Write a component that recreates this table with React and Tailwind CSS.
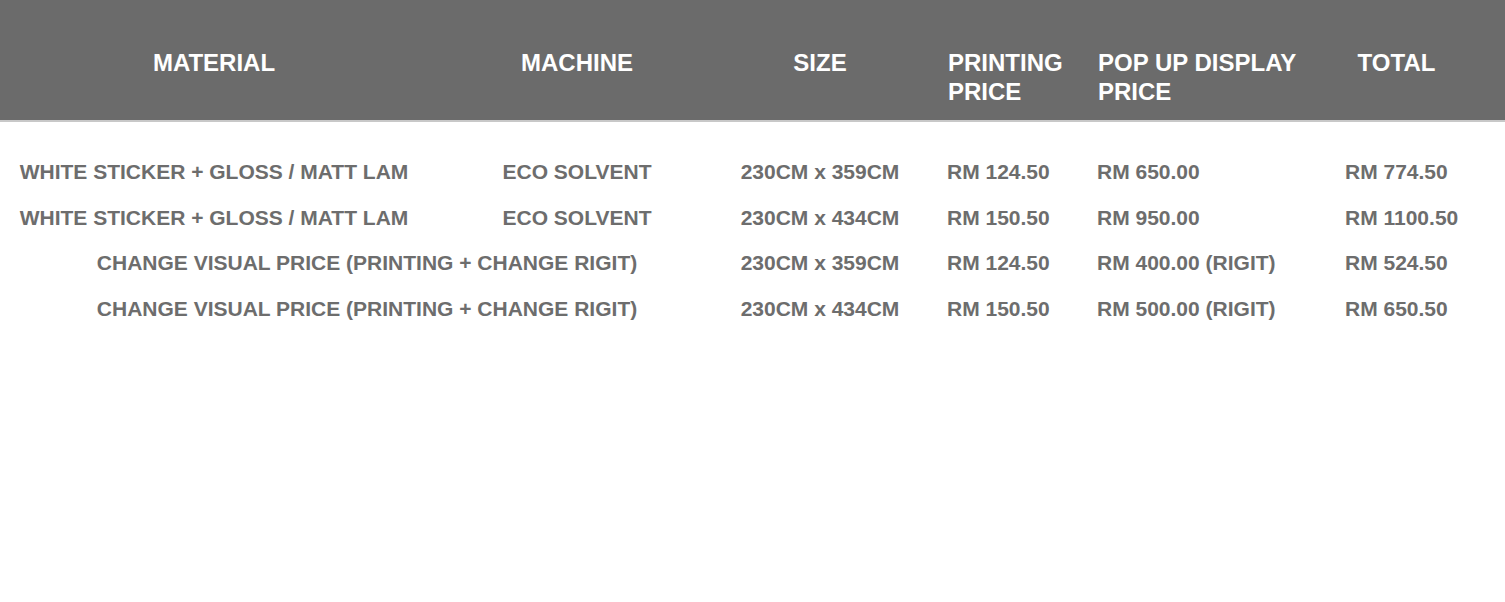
import React from 'react';

const rows = [
  { material: 'WHITE STICKER + GLOSS / MATT LAM', machine: 'ECO SOLVENT', size: '230CM x 359CM', printing: 'RM 124.50', popup: 'RM 650.00', total: 'RM 774.50' },
  { material: 'WHITE STICKER + GLOSS / MATT LAM', machine: 'ECO SOLVENT', size: '230CM x 434CM', printing: 'RM 150.50', popup: 'RM 950.00', total: 'RM 1100.50' },
  { combined: 'CHANGE VISUAL PRICE (PRINTING + CHANGE RIGIT)', size: '230CM x 359CM', printing: 'RM 124.50', popup: 'RM 400.00 (RIGIT)', total: 'RM 524.50' },
  { combined: 'CHANGE VISUAL PRICE (PRINTING + CHANGE RIGIT)', size: '230CM x 434CM', printing: 'RM 150.50', popup: 'RM 500.00 (RIGIT)', total: 'RM 650.50' },
];

const grid = 'grid grid-cols-[428px_298px_188px_166px_208px_1fr]';

function App() {
  return (
    <div className="min-h-screen bg-white font-['Liberation_Sans',Arial,sans-serif] font-bold">
      {/* Header */}
      <div className={`${grid} h-[122px] bg-[#6b6b6b] border-b-2 border-[#c8c8c8] pt-[48px] text-white text-[24px] leading-[29px] whitespace-nowrap`}>
        <div className="text-center">MATERIAL</div>
        <div className="text-center">MACHINE</div>
        <div className="text-center">SIZE</div>
        <div className="pl-[34px]">PRINTING<br />PRICE</div>
        <div className="pl-[18px]">POP UP DISPLAY<br />PRICE</div>
        <div className="text-center">TOTAL</div>
      </div>

      {/* Body */}
      <div className="pt-[27px] text-[#6d6d6d] text-[21px] leading-[45.6px] whitespace-nowrap">
        {rows.map((r, i) => (
          <div key={i} className={grid}>
            {r.combined ? (
              <div className="col-span-2 text-center pl-[8px]">{r.combined}</div>
            ) : (
              <>
                <div className="text-center">{r.material}</div>
                <div className="text-center">{r.machine}</div>
              </>
            )}
            <div className="text-center">{r.size}</div>
            <div className="pl-[33px]">{r.printing}</div>
            <div className="pl-[17px]">{r.popup}</div>
            <div className="pl-[57px]">{r.total}</div>
          </div>
        ))}
      </div>
    </div>
  );
}

export default App;
